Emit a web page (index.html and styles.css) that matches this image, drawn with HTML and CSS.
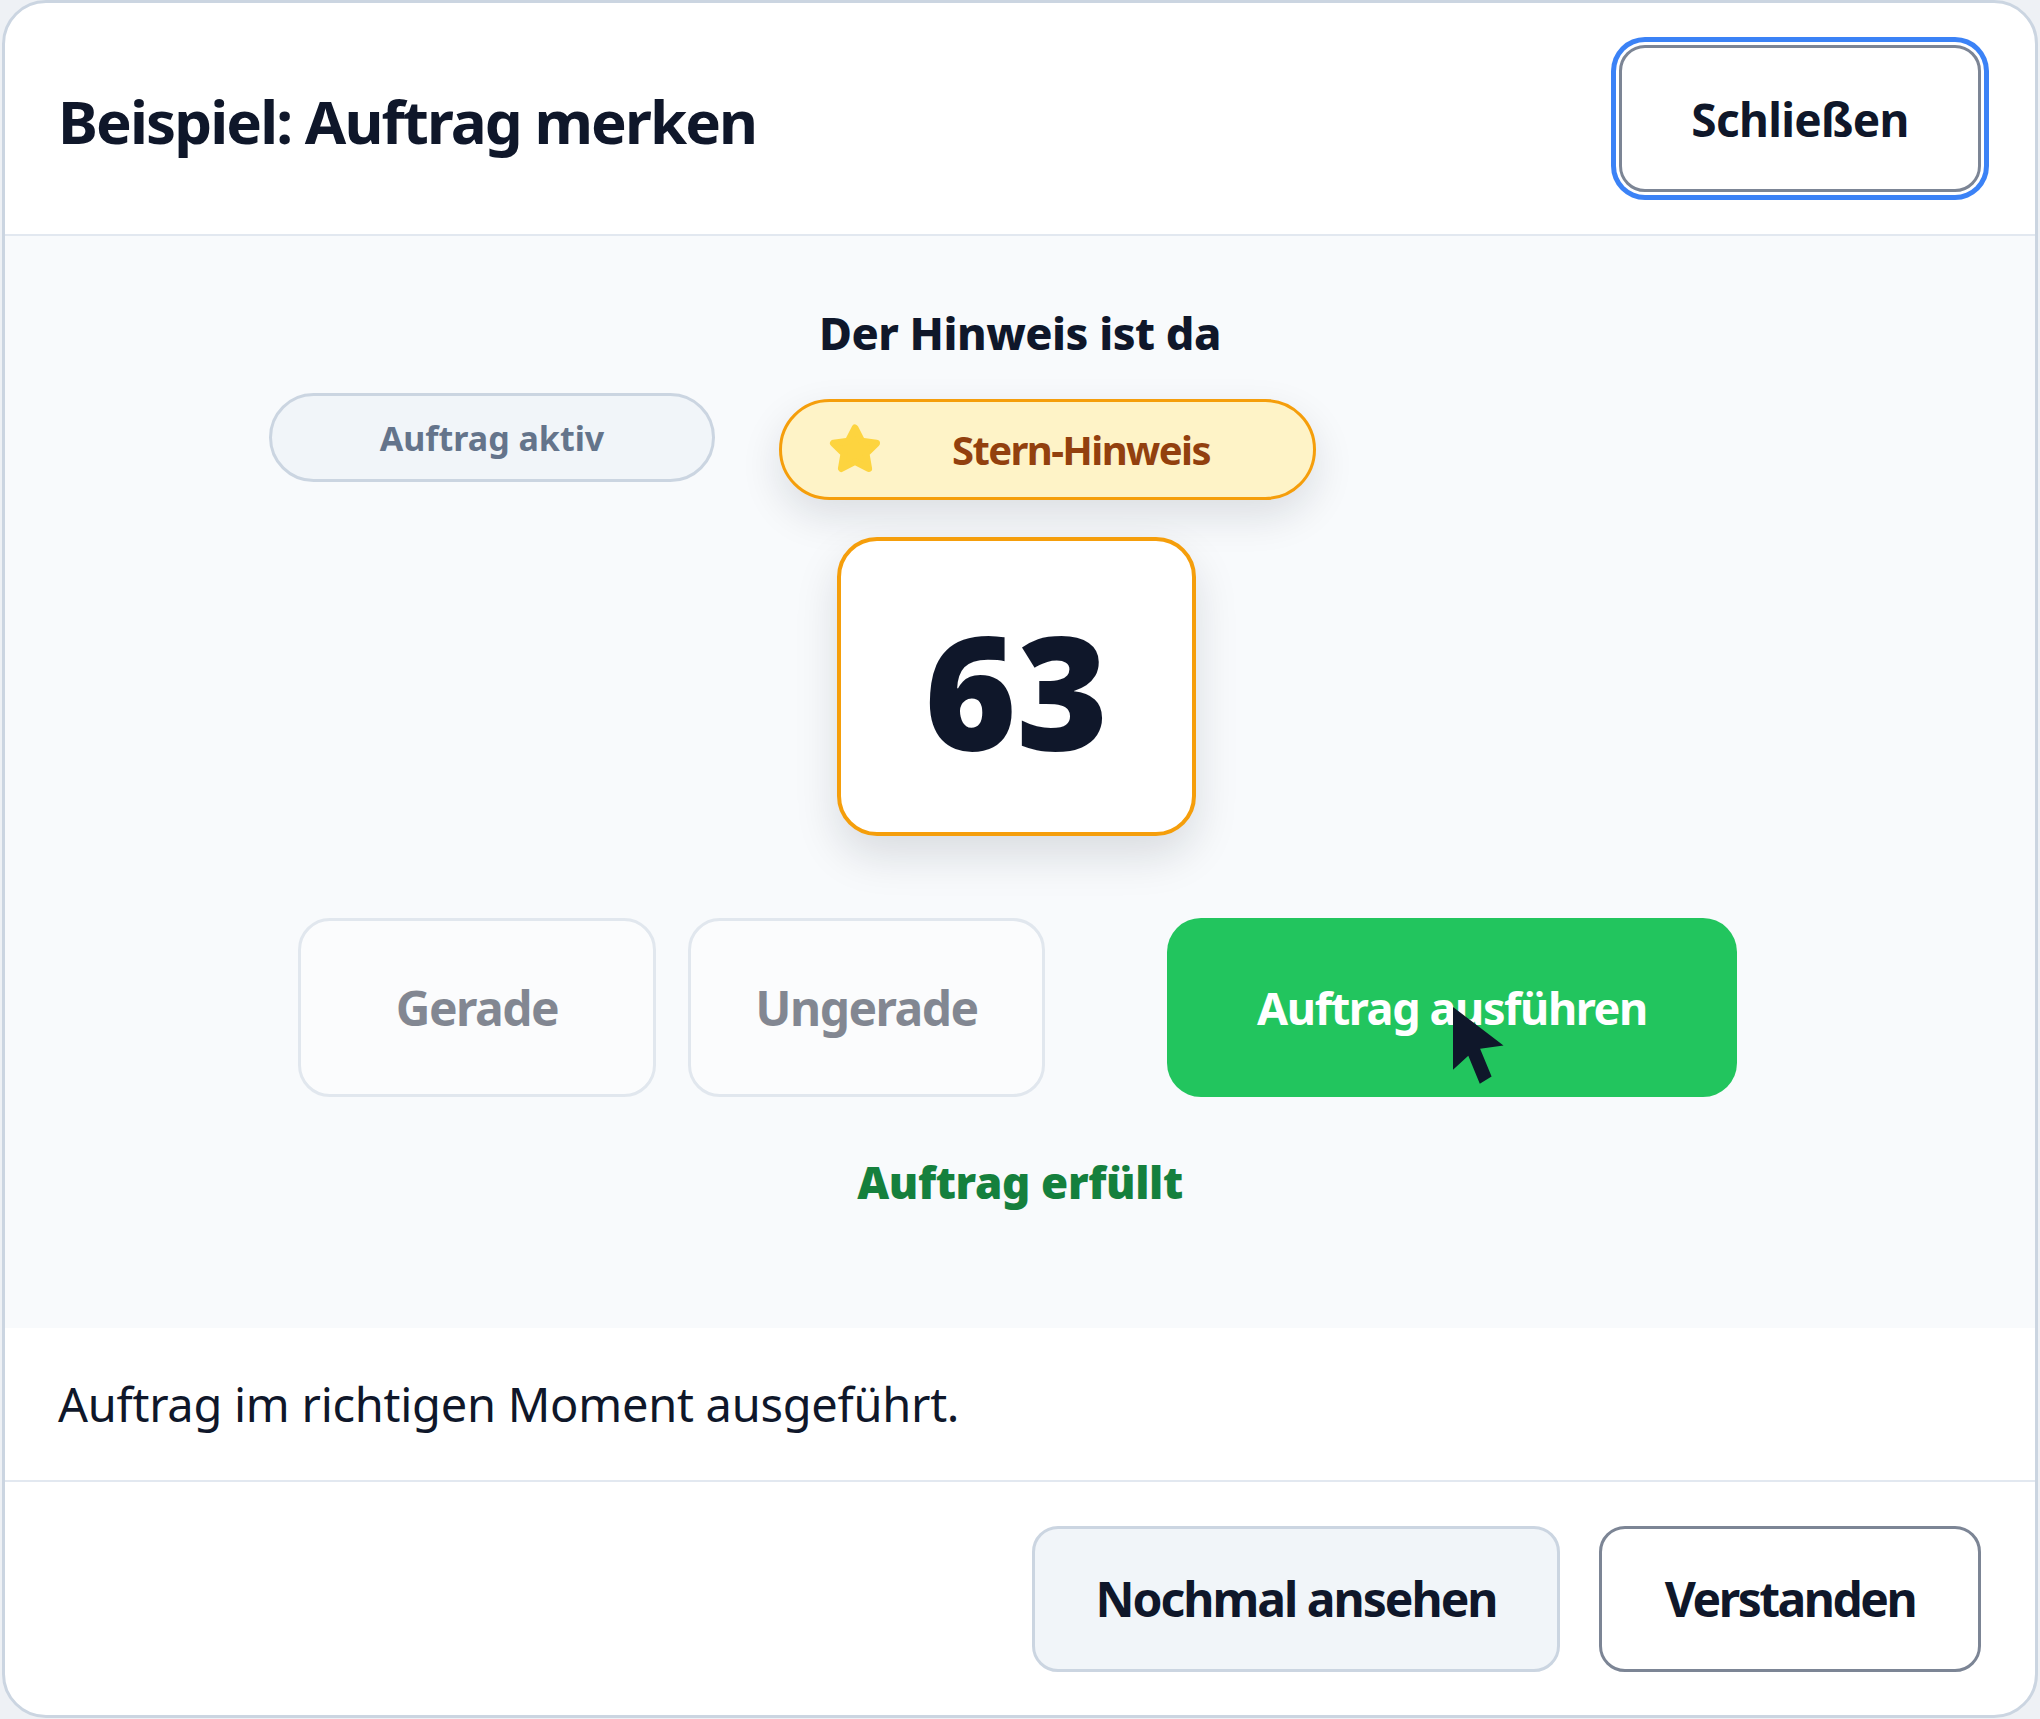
FILE: index.html
```html
<!DOCTYPE html>
<html lang="de">
<head>
<meta charset="utf-8">
<title>Beispiel: Auftrag merken</title>
<link rel="stylesheet" href="styles.css">
</head>
<body>
<div class="dialog">
  <header class="dlg-header">
    <h1 class="dlg-title">Beispiel: Auftrag merken</h1>
    <button class="btn btn-outline btn-close">Schließen</button>
  </header>
  <section class="demo">
    <h2 class="demo-title">Der Hinweis ist da</h2>
    <div class="pill-row">
      <span class="pill pill-task">Auftrag aktiv</span>
      <span class="pill pill-star">
        <svg class="star" viewBox="0 0 58 54" aria-hidden="true">
          <path d="M29 5 L35.8 18.3 L50.5 20.3 L40 30.6 L42.6 45.5 L29 38.5 L15.4 45.5 L18 30.6 L7.5 20.3 L22.2 18.3 Z" fill="#fdd43f" stroke="#fdd43f" stroke-width="7" stroke-linejoin="round"/>
        </svg>
        <span class="pill-star-text">Stern-Hinweis</span>
      </span>
    </div>
    <div class="number-card">63</div>
    <div class="choice-row">
      <button class="choice choice-even" disabled>Gerade</button>
      <button class="choice choice-odd" disabled>Ungerade</button>
      <button class="action">Auftrag ausführen<svg class="cursor" viewBox="0 0 51 77" aria-hidden="true"><path d="M0 0 L50.5 38.4 L27.1 41.7 L38.6 69.4 L26.8 76.7 L15.3 48.7 L0 62.7 Z" fill="#0f172a"/></svg></button>
    </div>
    <p class="result">Auftrag erfüllt</p>
  </section>
  <p class="message">Auftrag im richtigen Moment ausgeführt.</p>
  <footer class="dlg-footer">
    <button class="btn btn-secondary">Nochmal ansehen</button>
    <button class="btn btn-outline btn-ok">Verstanden</button>
  </footer>
</div>
</body>
</html>
```
FILE: styles.css
```css
html, body {
  margin: 0;
  padding: 0;
}
body {
  background: #eef1f5;
  height: 1719px;
  overflow: hidden;
  font-family: "Noto Sans", "Open Sans", "Liberation Sans", sans-serif;
  color: #0f172a;
}
.dialog {
  box-sizing: border-box;
  width: 2036px;
  height: 1718px;
  margin: 0 2px;
  border: 3px solid #cbd5e1;
  border-radius: 44px;
  background: #ffffff;
  overflow: hidden;
  display: flex;
  flex-direction: column;
}
.dlg-header {
  flex: none;
  height: 231px;
  display: flex;
  align-items: center;
  justify-content: space-between;
  padding: 0 54px 0 53px;
  border-bottom: 2px solid #e2e8f0;
}
.dlg-title {
  margin: 5px 0 0;
  font-size: 60px;
  font-weight: 700;
  line-height: 1.2;
  letter-spacing: -1.9px;
  color: #0f172a;
}
.btn {
  box-sizing: border-box;
  font-family: inherit;
  font-weight: 700;
  color: #0f172a;
  border-radius: 26px;
  display: flex;
  align-items: center;
  justify-content: center;
  padding: 0;
  cursor: pointer;
}
.btn-outline {
  background: #ffffff;
  border: 3px solid #7c8595;
}
.btn-close {
  width: 362px;
  height: 147px;
  font-size: 46px;
  letter-spacing: -0.7px;
  box-shadow: 0 0 0 3px #ffffff, 0 0 0 8px #3b82f6;
}
.btn-secondary {
  width: 528px;
  height: 146px;
  font-size: 48px;
  letter-spacing: -2px;
  background: #f1f5f9;
  border: 3px solid #cbd5e1;
}
.btn-ok {
  width: 382px;
  height: 146px;
  font-size: 48px;
  letter-spacing: -2.5px;
}
.demo {
  flex: none;
  box-sizing: border-box;
  height: 1092px;
  background: #f8fafc;
  padding-top: 70px;
  display: flex;
  flex-direction: column;
  align-items: center;
}
.demo-title {
  margin: 0;
  font-size: 45px;
  font-weight: 800;
  line-height: 54px;
  letter-spacing: -0.5px;
  color: #0f172a;
}
.pill-row {
  align-self: stretch;
  display: flex;
  align-items: flex-start;
  margin-top: 33px;
  padding-left: 264px;
}
.pill {
  box-sizing: border-box;
  border-radius: 999px;
  display: flex;
  align-items: center;
  font-weight: 700;
}
.pill-task {
  width: 446px;
  height: 89px;
  justify-content: center;
  border: 3px solid #cbd5e1;
  background: #f1f5f9;
  color: #64748b;
  font-size: 34px;
}
.pill-star {
  width: 537px;
  height: 101px;
  margin-left: 64px;
  margin-top: 6px;
  padding-left: 44px;
  border: 3px solid #f59e0b;
  background: #fef3c7;
  color: #92400e;
  font-size: 40px;
  letter-spacing: -1.6px;
  box-shadow: 0 16px 40px rgba(15, 23, 42, 0.12);
}
.star {
  width: 58px;
  height: 54px;
  flex: none;
  margin-right: 68px;
}
.number-card {
  box-sizing: border-box;
  width: 359px;
  height: 299px;
  margin-top: 37px;
  margin-right: 7px;
  padding-top: 6px;
  border: 4px solid #f59e0b;
  border-radius: 40px;
  background: #ffffff;
  box-shadow: 0 20px 44px rgba(15, 23, 42, 0.13);
  display: flex;
  align-items: center;
  justify-content: center;
  font-size: 157px;
  font-weight: 900;
  color: #0f172a;
  line-height: 1;
}
.choice-row {
  display: flex;
  margin-top: 82px;
  margin-right: 5px;
}
.choice {
  box-sizing: border-box;
  width: 358px;
  height: 179px;
  border: 3px solid #cbd5e1;
  border-radius: 32px;
  background: #ffffff;
  color: #0f172a;
  font-family: inherit;
  font-size: 48px;
  font-weight: 700;
  letter-spacing: -1.55px;
  opacity: 0.5;
  padding: 0;
}
.choice-even {
  margin-right: 32px;
}
.choice-odd {
  width: 357px;
  margin-right: 122px;
}
.action {
  position: relative;
  box-sizing: border-box;
  width: 570px;
  height: 179px;
  border: none;
  border-radius: 34px;
  background: #22c55e;
  color: #ffffff;
  font-family: inherit;
  font-size: 45px;
  font-weight: 700;
  letter-spacing: -1.4px;
  padding: 0;
}
.cursor {
  position: absolute;
  left: 286px;
  top: 89px;
  width: 51px;
  height: 77px;
}
.result {
  margin: 59px 0 0;
  font-size: 44px;
  font-weight: 900;
  line-height: 53px;
  letter-spacing: -0.35px;
  color: #15803d;
}
.message {
  flex: none;
  box-sizing: border-box;
  height: 154px;
  margin: 0;
  padding: 0 53px;
  display: flex;
  align-items: center;
  font-size: 47px;
  font-weight: 400;
  letter-spacing: -0.27px;
  color: #0f172a;
  border-bottom: 2px solid #e2e8f0;
}
.dlg-footer {
  flex: 1;
  display: flex;
  justify-content: flex-end;
  align-items: center;
  gap: 39px;
  padding: 0 54px;
}
```
